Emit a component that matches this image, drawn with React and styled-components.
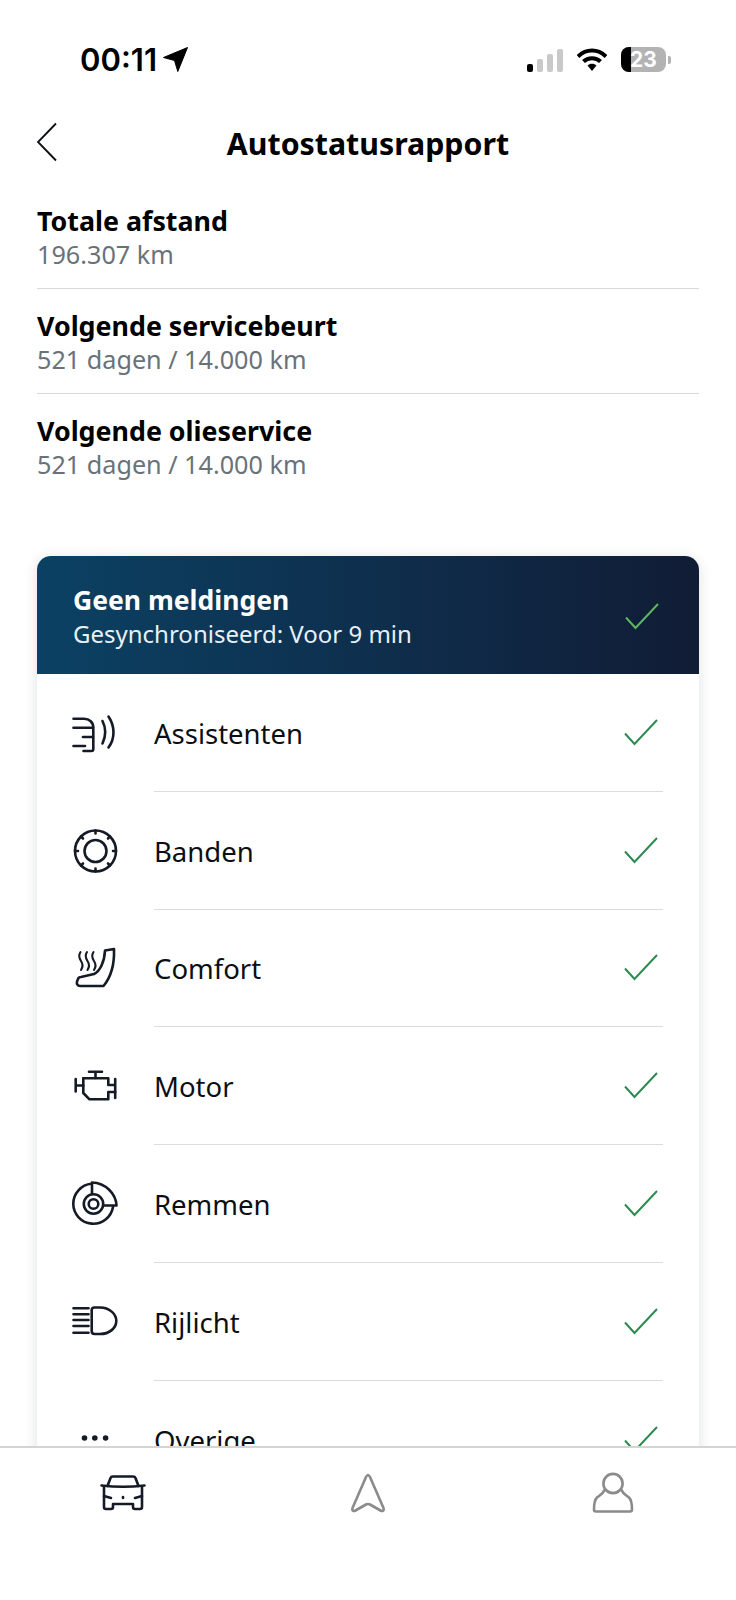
import React from "react";
import styled, { createGlobalStyle } from "styled-components";

const GlobalStyle = createGlobalStyle`
  html, body {
    margin: 0;
    padding: 0;
    background: #fff;
  }
  body {
    font-family: "Noto Sans", "Open Sans", sans-serif;
    color: #0b0f14;
  }
`;

const Page = styled.div`
  width: 736px;
  height: 1600px;
  display: flex;
  flex-direction: column;
  overflow: hidden;
  background: #fff;
`;

const StatusBar = styled.div`
  height: 97px;
  padding: 47px 65px 0 80px;
  box-sizing: border-box;
  display: flex;
  justify-content: space-between;
  align-items: flex-start;
  flex-shrink: 0;
`;

const Time = styled.div`
  display: flex;
  align-items: center;
  gap: 6px;
  font-family: Inter, sans-serif;
  font-size: 31px;
  line-height: 25px;
  font-weight: 600;
  letter-spacing: 0;
  color: #000;
`;

const StatusIcons = styled.div`
  display: flex;
  align-items: center;
  gap: 14px;
`;

const Signal = styled.div`
  display: flex;
  align-items: flex-end;
  gap: 4px;
  height: 24px;
`;

const SignalBar = styled.div`
  width: 6px;
  height: ${(p) => p.$h}px;
  border-radius: 2px;
  background: ${(p) => (p.$on ? "#000" : "#c9c9c9")};
`;

const Battery = styled.div`
  position: relative;
  width: 45px;
  height: 25px;
  border-radius: 8px;
  overflow: hidden;
  background: #b3b3b3;
  display: flex;
  align-items: center;
  justify-content: center;
  font-family: Inter, sans-serif;
  font-size: 21px;
  font-weight: 700;
  color: #fff;
`;

const BatteryFill = styled.div`
  position: absolute;
  left: 0;
  top: 0;
  bottom: 0;
  width: 10px;
  background: #000;
`;

const BatteryWrap = styled.div`
  display: flex;
  align-items: center;
  gap: 2px;
`;

const BatteryCap = styled.div`
  width: 3px;
  height: 8px;
  border-radius: 0 2px 2px 0;
  background: #b3b3b3;
`;

const Header = styled.div`
  height: 92px;
  position: relative;
  display: flex;
  align-items: center;
  justify-content: center;
  flex-shrink: 0;
`;

const BackButton = styled.div`
  position: absolute;
  left: 36px;
  top: 25px;
  display: flex;
`;

const Title = styled.div`
  font-size: 30.3px;
  font-weight: 700;
  color: #000;
`;

const Content = styled.div`
  flex: 1;
  min-height: 0;
  overflow: hidden;
  padding: 0 37px;
`;

const InfoItem = styled.div`
  height: 105px;
  box-sizing: border-box;
  padding-top: 19px;
  border-bottom: ${(p) => (p.$last ? "none" : "1px solid #d9d9d9")};

  &:first-child {
    height: 100px;
    padding-top: 14px;
  }
`;

const InfoLabel = styled.div`
  font-size: 26.8px;
  line-height: 36px;
  font-weight: 700;
  color: #000;
`;

const InfoValue = styled.div`
  margin-top: -1px;
  font-size: 25.2px;
  line-height: 32px;
  color: #6a7279;
`;

const Card = styled.div`
  margin-top: 57px;
  border-radius: 14px;
  background: #fff;
  box-shadow: 0 2px 14px rgba(30, 40, 60, 0.14);
`;

const CardHeader = styled.div`
  height: 118px;
  box-sizing: border-box;
  padding: 2px 40px 0 36px;
  display: flex;
  align-items: center;
  justify-content: space-between;
  border-radius: 14px 14px 0 0;
  background: linear-gradient(90deg, #0b4163 0%, #0e3150 45%, #111c35 100%);
  color: #fff;
`;

const HeaderTitle = styled.div`
  font-size: 26.5px;
  line-height: 36px;
  font-weight: 700;
`;

const HeaderSub = styled.div`
  font-size: 24px;
  line-height: 32px;
  color: #e8f0f5;
`;

const Row = styled.div`
  height: 117.8px;
  padding-left: 34px;
  display: flex;
  align-items: center;
`;

const RowIcon = styled.div`
  width: 48px;
  height: 48px;
  margin-right: 35px;
  flex-shrink: 0;
`;

const RowBody = styled.div`
  flex: 1;
  align-self: stretch;
  margin-right: 36px;
  padding-right: 5px;
  display: flex;
  align-items: center;
  justify-content: space-between;
  border-bottom: ${(p) => (p.$last ? "none" : "1px solid #dcdcdc")};
`;

const RowLabel = styled.div`
  padding-top: 2px;
  font-size: 27.5px;
  color: #0b0f14;
`;

const TabBar = styled.div`
  height: 154px;
  flex-shrink: 0;
  box-sizing: border-box;
  border-top: 2px solid #d4d4d4;
  background: #fff;
  padding-top: 23px;
  display: grid;
  grid-template-columns: repeat(3, 1fr);
  justify-items: center;
  align-items: start;
  position: relative;
`;

const Icon = ({ children, color = "#141b26", width = 2.6 }) => (
  <svg
    width="48"
    height="48"
    viewBox="0 0 48 48"
    fill="none"
    stroke={color}
    strokeWidth={width}
    strokeLinecap="round"
    strokeLinejoin="round"
  >
    {children}
  </svg>
);

const Check = ({ color }) => (
  <svg width="34" height="27" viewBox="0 0 34 27" fill="none" stroke={color} strokeWidth="2">
    <path d="M1 14.5 L10.5 25 L33 1" />
  </svg>
);

const AssistIcon = () => (
  <Icon>
    <path d="M2.5 9.7H13C18.5 9.7 22.3 13.5 22.3 18.7V40C22.3 41.3 21.6 42 20.5 42H12.5" />
    <path d="M2.5 18.7H22" />
    <path d="M12 28H22" />
    <path d="M2.5 37H14" />
    <path d="M31.5 12C35 19 35 27 31.5 34.5" />
    <path d="M37.5 7.5C43.8 17 44.5 29 37.5 38.5" />
  </Icon>
);

const TireIcon = () => (
  <Icon>
    <circle cx="24.5" cy="24" r="20.5" />
    <circle cx="24.5" cy="24" r="11" />
    <path d="M24.5 3.5V6.5M24.5 41.5V44.5M4 24H7M42 24H45" />
    <path d="M10 9.5L12 11.5M37 36.5L39 38.5M39 9.5L37 11.5M12 36.5L10 38.5" />
  </Icon>
);

const SeatIcon = () => (
  <Icon>
    <path d="M34 6.5L43 5C43.5 19 40 33 32.5 42H9C6.5 42 5.5 40 6 37.5L7 35C7.5 33.5 8.5 33 10 33L23 30C29 27 33.5 18 34 6.5Z" />
    <g strokeWidth="2.1">
      <path d="M9.5 8C7.5 11 8 14 10 17C12 20 12 23 10 26" />
      <path d="M16 8C14 11 14.5 14 16.5 17C18.5 20 18.5 23 16.5 26" />
      <path d="M22.5 8C20.5 11 21 14 23 17C25 20 25 23 23 26" />
    </g>
  </Icon>
);

const EngineIcon = () => (
  <Icon>
    <path d="M18 9.7H31M24.5 9.7V16" />
    <path d="M4.7 17V29.5M4.7 23.5H12.3" />
    <path d="M12.3 16.3H37.3V23H44.2M44.2 17V36" />
    <path d="M12.3 16.3V31L18.5 37.3H37.3V30H44.2" />
  </Icon>
);

const BrakeIcon = () => (
  <Icon>
    <path d="M20.5 3.8A20 20 0 1 0 42 27" />
    <path d="M21 14V2.5C34.5 3 45 13.5 45.5 25.5H33.5" />
    <circle cx="22.5" cy="24" r="9.7" />
    <circle cx="22.5" cy="24" r="4.8" />
  </Icon>
);

const BeamIcon = () => (
  <Icon>
    <path d="M2.5 10.3H17.5M2.5 16.3H17.5M2.5 22H17.5M2.5 28H17.5M2.5 34.7H17.5" />
    <path d="M23.5 9.5H29C38.5 9.5 45.3 16 45.3 23C45.3 30 38.5 36 29 36H23.5C21.5 36 20.7 35 20.7 33V12C20.7 10.5 21.5 9.5 23.5 9.5Z" />
  </Icon>
);

const DotsIcon = () => (
  <Icon>
    <circle cx="13.5" cy="22" r="2.8" fill="#141b26" stroke="none" />
    <circle cx="23.8" cy="22" r="2.8" fill="#141b26" stroke="none" />
    <circle cx="34.6" cy="22" r="2.8" fill="#141b26" stroke="none" />
  </Icon>
);

const rows = [
  { label: "Assistenten", icon: <AssistIcon /> },
  { label: "Banden", icon: <TireIcon /> },
  { label: "Comfort", icon: <SeatIcon /> },
  { label: "Motor", icon: <EngineIcon /> },
  { label: "Remmen", icon: <BrakeIcon /> },
  { label: "Rijlicht", icon: <BeamIcon /> },
  { label: "Overige", icon: <DotsIcon /> },
];

const info = [
  { label: "Totale afstand", value: "196.307 km" },
  { label: "Volgende servicebeurt", value: "521 dagen / 14.000 km" },
  { label: "Volgende olieservice", value: "521 dagen / 14.000 km" },
];

export default function App() {
  return (
    <Page>
      <GlobalStyle />
      <StatusBar>
        <Time>
          00:11
          <svg width="25" height="25" viewBox="0 0 25 25">
            <path d="M24.5 0.5L14.8 24.5L11.5 13.5L0.5 10.5Z" fill="#000" stroke="#000" strokeLinejoin="round" />
          </svg>
        </Time>
        <StatusIcons>
          <Signal>
            <SignalBar $h={8} $on />
            <SignalBar $h={13} />
            <SignalBar $h={18} />
            <SignalBar $h={23} />
          </Signal>
          <svg width="30" height="24" viewBox="0 0 30 24">
            <path d="M1 8.5C9 0.5 21 0.5 29 8.5" fill="none" stroke="#000" strokeWidth="4" />
            <path d="M6.5 13.5C11 9 19 9 23.5 13.5" fill="none" stroke="#000" strokeWidth="4" />
            <path d="M10.5 17.5C13 15 17 15 19.5 17.5L15 23Z" fill="#000" />
          </svg>
          <BatteryWrap>
            <Battery>
              <BatteryFill />
              23
            </Battery>
            <BatteryCap />
          </BatteryWrap>
        </StatusIcons>
      </StatusBar>
      <Header>
        <BackButton>
          <svg width="22" height="40" viewBox="0 0 22 40" fill="none" stroke="#0b0f14" strokeWidth="1.8">
            <path d="M20 1.5L2 20L20 38.5" />
          </svg>
        </BackButton>
        <Title>Autostatusrapport</Title>
      </Header>
      <Content>
        {info.map((item, i) => (
          <InfoItem key={item.label} $last={i === info.length - 1}>
            <InfoLabel>{item.label}</InfoLabel>
            <InfoValue>{item.value}</InfoValue>
          </InfoItem>
        ))}
        <Card>
          <CardHeader>
            <div>
              <HeaderTitle>Geen meldingen</HeaderTitle>
              <HeaderSub>Gesynchroniseerd: Voor 9 min</HeaderSub>
            </div>
            <Check color="#5cb85c" />
          </CardHeader>
          {rows.map((row, i) => (
            <Row key={row.label}>
              <RowIcon>{row.icon}</RowIcon>
              <RowBody $last={i === rows.length - 1}>
                <RowLabel>{row.label}</RowLabel>
                <Check color="#2a8a4f" />
              </RowBody>
            </Row>
          ))}
        </Card>
      </Content>
      <TabBar>
        <Icon>
          <path d="M8.5 15L11.5 7Q12 5.5 14 5.5H34Q36 5.5 36.5 7L39.5 15" />
          <path d="M2.5 14.5Q24 17 45.5 14.5" />
          <path d="M5 15.5V36Q5 38 7 38H12Q14 38 14 36V33H34V36Q34 38 36 38H41Q43 38 43 36V15.5" />
          <path d="M5 25L12 27M43 25L36 27M24 26V27" />
        </Icon>
        <Icon color="#8b8b8b">
          <path d="M24 4C25 4 25.5 5 26 6L39.5 37C40.5 39.5 38.5 40.5 36.5 39.5L26 33.5C25 33 23 33 22 33.5L11.5 39.5C9.5 40.5 7.5 39.5 8.5 37L22 6C22.5 5 23 4 24 4Z" />
        </Icon>
        <Icon color="#8b8b8b">
          <ellipse cx="24" cy="12.5" rx="9.6" ry="9.6" />
          <path d="M15.5 19C14 23 11 24 8 26.5C5.5 29 5 34 5 38.5C5 40 5.5 40.5 7 40.5H41C42.5 40.5 43 40 43 38.5C43 34 42.5 29 40 26.5C37 24 34 23 32.5 19" />
        </Icon>
      </TabBar>
    </Page>
  );
}
